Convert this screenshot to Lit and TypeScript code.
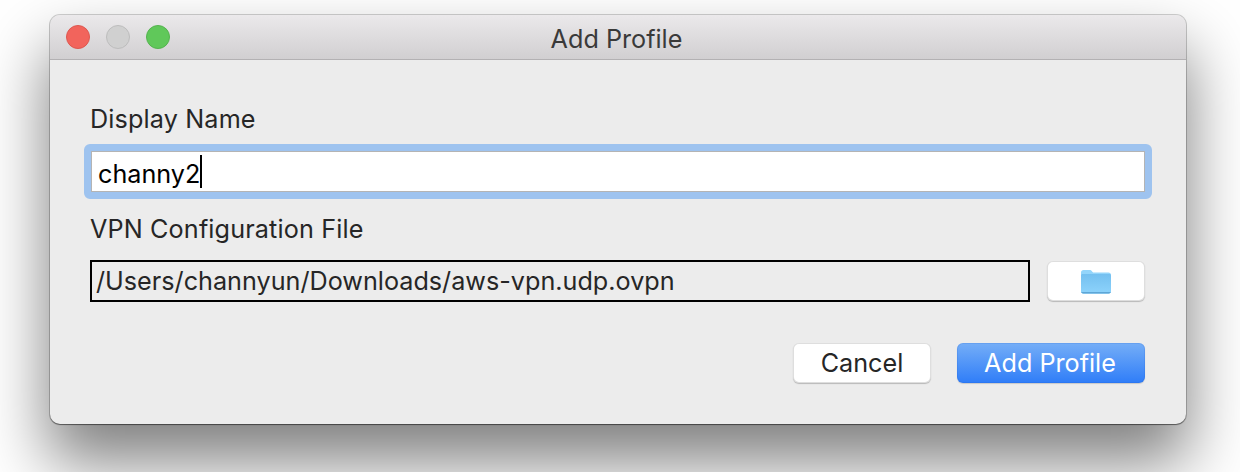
import { LitElement, html, css } from "lit";
import { customElement } from "lit/decorators.js";

@customElement("app-root")
export class AppRoot extends LitElement {
  static styles = css`
    :host {
      display: block;
      width: 1240px;
      height: 472px;
      overflow: hidden;
      background: #fff;
      font-family: Inter, "Liberation Sans", sans-serif;
      box-sizing: border-box;
      padding: 15px 54px 0 50px;
    }

    .window {
      height: 409px;
      box-sizing: border-box;
      border-radius: 10px;
      background: #ececec;
      box-shadow: 0 0 0 1px rgba(0, 0, 0, 0.18), 0 1px 1px rgba(0, 0, 0, 0.4),
        0 36px 64px 2px rgba(0, 0, 0, 0.5);
      display: flex;
      flex-direction: column;
    }

    .titlebar {
      height: 45px;
      flex: none;
      box-sizing: border-box;
      border-radius: 10px 10px 0 0;
      border-bottom: 1px solid #b3b1b3;
      background: linear-gradient(#ebe9eb, #d1cfd1);
      display: flex;
      align-items: center;
      padding-left: 16px;
      position: relative;
    }

    .lights {
      display: flex;
      gap: 16px;
    }

    .light {
      width: 24px;
      height: 24px;
      box-sizing: border-box;
      border-radius: 50%;
      border: 1px solid;
    }

    .red {
      background: #f2645c;
      border-color: #dd5850;
    }

    .grey {
      background: #d0d0d0;
      border-color: #bdbdbd;
    }

    .green {
      background: #60c85a;
      border-color: #55b34f;
    }

    .title {
      position: absolute;
      inset: 3px 3px 0 0;
      display: flex;
      align-items: center;
      justify-content: center;
      font-size: 25.2px;
      color: #3a3a3a;
    }

    .body {
      flex: 1;
      padding: 43px 41px 0 41px;
      display: flex;
      flex-direction: column;
      color: #262626;
    }

    .label {
      font-size: 25.2px;
      line-height: 32px;
      letter-spacing: 0.14px;
      margin-left: -1px;
    }

    .ring {
      margin: 9px -7px 0 -7px;
      border: 7px solid #9ec3ef;
      border-radius: 6px;
    }

    .input {
      height: 41px;
      box-sizing: border-box;
      background: #fff;
      border: 1px solid #b4b4b4;
      padding-left: 6px;
      display: flex;
      align-items: center;
      font-size: 25.2px;
      color: #000;
    }

    .value {
      padding-top: 5px;
    }

    .caret {
      width: 2px;
      height: 33px;
      background: #000;
    }

    .gap-label {
      margin-top: 14px;
    }

    .file-row {
      margin-top: 15px;
      display: flex;
      align-items: center;
      gap: 17px;
    }

    .path {
      flex: 1;
      height: 42px;
      box-sizing: border-box;
      border: 2px solid #000;
      margin-left: -1px;
      padding-left: 4px;
      display: flex;
      align-items: center;
      font-size: 25.2px;
      color: #262626;
    }

    .btn {
      height: 40px;
      box-sizing: border-box;
      border-radius: 6px;
      background: #fff;
      box-shadow: inset 0 0 0 1px rgba(0, 0, 0, 0.13), 0 1px 1px rgba(0, 0, 0, 0.22);
      display: flex;
      align-items: center;
      justify-content: center;
      font-size: 25.2px;
      color: #262626;
    }

    .folder {
      width: 98px;
    }

    .actions {
      margin-top: 41px;
      display: flex;
      justify-content: flex-end;
      gap: 26px;
    }

    .cancel {
      width: 138px;
    }

    .primary {
      width: 188px;
      padding-right: 2px;
      color: #fff;
      background: linear-gradient(#75aef7, #2f7df8);
      box-shadow: inset 0 0 0 1px rgba(30, 90, 200, 0.15), 0 1px 1px rgba(0, 0, 0, 0.15);
    }
  `;

  render() {
    return html`
      <div class="window">
        <div class="titlebar">
          <div class="lights">
            <div class="light red"></div>
            <div class="light grey"></div>
            <div class="light green"></div>
          </div>
          <div class="title">Add Profile</div>
        </div>
        <div class="body">
          <div class="label">Display Name</div>
          <div class="ring">
            <div class="input"><span class="value">channy2</span><span class="caret"></span></div>
          </div>
          <div class="label gap-label">VPN Configuration File</div>
          <div class="file-row">
            <div class="path">/Users/channyun/Downloads/aws-vpn.udp.ovpn</div>
            <div class="btn folder">
              <svg width="32" height="26" viewBox="0 0 32 26">
                <defs>
                  <linearGradient id="f" x1="0" y1="0" x2="0" y2="1">
                    <stop offset="0" stop-color="#74c0f0" />
                    <stop offset="1" stop-color="#8dd3fb" />
                  </linearGradient>
                </defs>
                <path d="M1 4.500C1 3 2 2 3.500 2h6c1.200 0 1.800.5 2.600 1.400l1 1.100H28.500c1.500 0 2.500 1 2.500 2.500V23c0 1.500-1 2.500-2.500 2.500h-25C2 25.500 1 24.500 1 23z" fill="#93d5fb" />
                <path d="M1 7.500c0-.8.7-1.500 1.500-1.500h27c.8 0 1.500.7 1.500 1.500V23c0 1.500-1 2.500-2.500 2.500h-25C2 25.500 1 24.500 1 23z" fill="url(#f)" />
                <path d="M1 24c.4.9 1.300 1.500 2.500 1.500h25c1.200 0 2.100-.6 2.500-1.500z" fill="#5ea6d6" />
              </svg>
            </div>
          </div>
          <div class="actions">
            <div class="btn cancel">Cancel</div>
            <div class="btn primary">Add Profile</div>
          </div>
        </div>
      </div>
    `;
  }
}
